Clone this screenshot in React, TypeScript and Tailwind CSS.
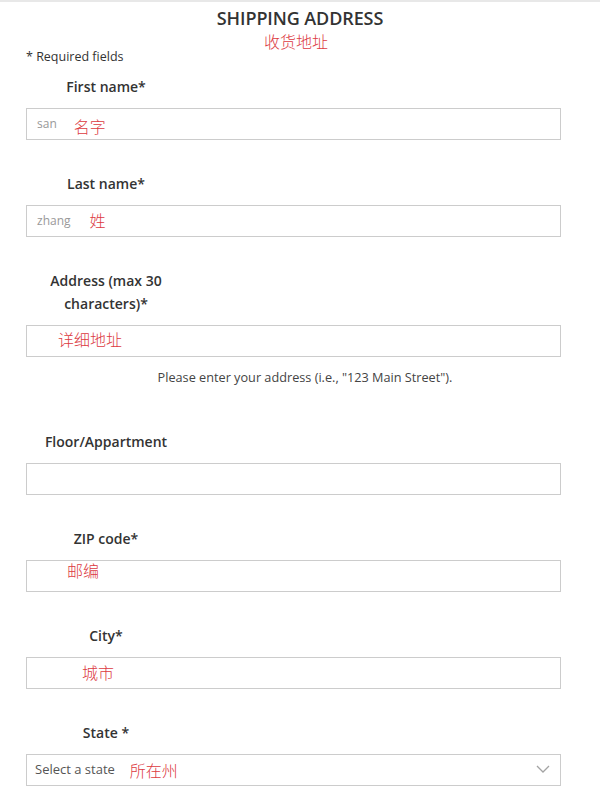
import React from 'react';

const zh = 'text-[#dc3a3f] font-["Noto_Sans_CJK_SC",sans-serif] font-light text-[16px] leading-[20px]';

interface FieldProps {
  label: React.ReactNode;
  children?: React.ReactNode;
  select?: boolean;
}

const Field: React.FC<FieldProps> = ({ label, children, select }) => (
  <div className="mb-[32px]">
    <div className="w-[160px] text-center text-[14px] leading-[23px] font-semibold text-[#333] mb-[10px]">{label}</div>
    <div className="h-[32px] w-[535px] border border-[#cccccc] bg-white flex items-center relative">
      {children}
      {select && (
        <svg className="absolute right-[10px] top-[9px]" width="14" height="10" viewBox="0 0 14 10" fill="none">
          <path d="M1 2 L7 8 L13 2" stroke="#a3a3a3" strokeWidth="1.3" />
        </svg>
      )}
    </div>
  </div>
);

export default function App() {
  return (
    <div className="w-[600px] min-h-[793px] bg-white border-t-2 border-[#e8e8e8] font-['Open_Sans',sans-serif] overflow-hidden">
      {/* Header */}
      <div className="text-center text-[18px] leading-[24px] font-semibold text-[#333] mt-[4px] tracking-[-0.1px]">SHIPPING ADDRESS</div>
      <div className="flex justify-center pr-[8px] mt-[1px]">
        <span className={zh}>收货地址</span>
      </div>

      <div className="pl-[26px]">
        <div className="text-[12.5px] leading-[12px] text-[#333] mb-[12px]">* Required fields</div>

        <Field label="First name*">
          <span className="ml-[10px] text-[12px] text-[#999]">san</span>
          <span className={`${zh} ml-[17px] mt-[4px]`}>名字</span>
        </Field>

        <Field label="Last name*">
          <span className="ml-[10px] text-[12px] text-[#999]">zhang</span>
          <span className={`${zh} ml-[19px] -mt-[2px]`}>姓</span>
        </Field>

        <div className="mb-[45px]">
          <div className="w-[160px] text-center text-[14px] leading-[23px] font-semibold text-[#333] mb-[10px]">
            Address (max 30
            <br />
            characters)*
          </div>
          <div className="h-[32px] w-[535px] border border-[#cccccc] flex items-center">
            <span className={`${zh} ml-[31px] -mt-[4px]`}>详细地址</span>
          </div>
          <div className="w-[535px] flex justify-center pl-[23px] mt-[12px] text-[12.7px] leading-[16px] text-[#444]">
            Please enter your address (i.e., "123 Main Street").
          </div>
        </div>

        <Field label="Floor/Appartment" />

        <Field label="ZIP code*">
          <span className={`${zh} ml-[40px] -mt-[12px]`}>邮编</span>
        </Field>

        <Field label="City*">
          <span className={`${zh} ml-[55px] -mt-[2px]`}>城市</span>
        </Field>

        <Field label="State *" select>
          <span className="ml-[8px] text-[13px] text-[#555]">Select a state</span>
          <span className={`${zh} ml-[15px]`}>所在州</span>
        </Field>
      </div>
    </div>
  );
}
